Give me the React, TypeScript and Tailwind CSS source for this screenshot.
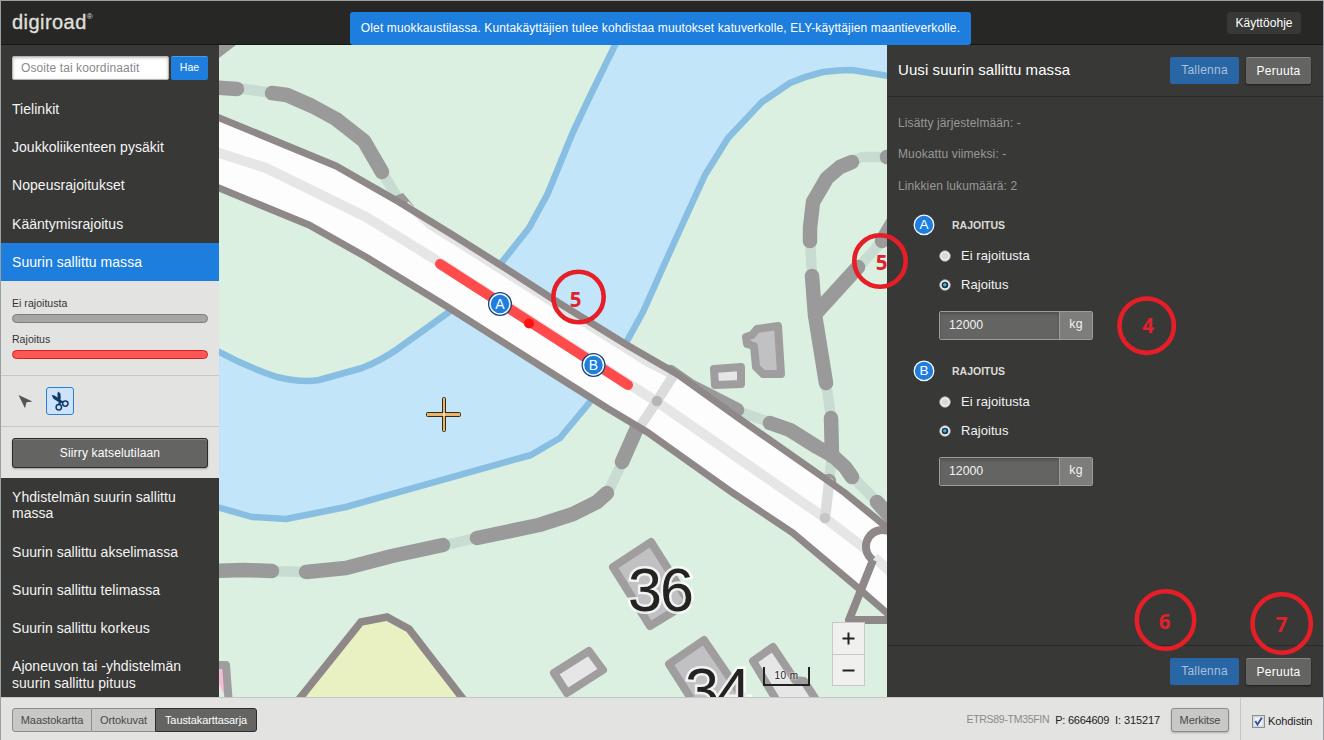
import React from "react";

const POINTS: { [k: string]: string } = {
  upperEdge: "210,114 336,166 399,202 456,237 502,266 559,303 627,345 677,374 737,417 827,480 845,493 895,534",
  lowerEdge: "210,184 219,188 309,225 366,257 446,306 550,372 607,408 647,432 733,493 793,533 857,587 895,620",
  center: "210,150 266,168 366,217 436,260 657,402 825,518 863,547 895,576",
};

function Trail({ points, gap }: { points: string; gap?: boolean }) {
  return (
    <polyline
      points={points}
      fill="none"
      stroke={gap ? "#c8dcd1" : "#9b9a9b"}
      strokeWidth={gap ? 10.5 : 14.5}
      strokeLinecap={gap ? "butt" : "round"}
      strokeLinejoin="round"
    />
  );
}

function MapMarker({ x, y, label }: { x: number; y: number; label: string }) {
  return (
    <g>
      <circle cx={x} cy={y} r={12} fill="#17406e" />
      <circle cx={x} cy={y} r={10} fill="#1d7edd" stroke="#f4f9fe" strokeWidth={1.5} />
      <text x={x} y={y + 5} textAnchor="middle" fontSize={14} fill="#fff" fontFamily="Liberation Sans, Arial, sans-serif">
        {label}
      </text>
    </g>
  );
}

function HouseNumber({ x, y, text }: { x: number; y: number; text: string }) {
  return (
    <g fontSize={61} letterSpacing={-2} fontFamily="Liberation Sans, Arial, sans-serif">
      <text x={x} y={y} fill="#252321" stroke="#ffffff" strokeOpacity={0.8} strokeWidth={5} paintOrder="stroke">
        {text}
      </text>
    </g>
  );
}

function MapDrawing() {
  return (
    <svg className="block h-full w-full" viewBox="219 45 668 652">
      <rect x="219" y="45" width="668" height="652" fill="#dbf0e0" />
      <path
        d="M620 35 L592 92 L573 132 L550 188 L547 195 L529 228 L502 262 L449 312 L396 350 Q380 361 362 368 L319 380 Q302 383 277 377 Q246 367 210 347 L210 505 L252 517 L286 519 L346 507 L531 455 L560 438 L590 402 L627 341 L643 312 L673 245 L705 175 L728 138 L762 102 L790 83 Q806 76 823 72 Q838 70 852 70 L895 77 L895 35 Z"
        fill="#c3e5f9"
        stroke="#88bee1"
        strokeWidth="6.5"
        strokeLinejoin="round"
      />
      <path d="M219 45 L236 45 L219 58 Z" fill="#9b9a9b" />
      <Trail gap points="236,88 274,93" />
      <Trail points="210,87 237,89" />
      <Trail gap points="382,172 400,202" />
      <Trail points="272,93 287,95 312,106 336,119 364,141 382,172" />
      <polygon points="395,196 403,193 414,206 410,210" fill="#9b9a9b" />
      <Trail gap points="270,571 308,572" />
      <Trail points="210,571 244,570 272,571" />
      <Trail gap points="442,546 480,537" />
      <Trail points="306,572 346,568 392,556 443,545" />
      <Trail gap points="607,494 623,461" />
      <Trail points="477,538 539,525 573,514 597,502 607,493" />
      <Trail points="622,462 637,428" />
      <Trail gap points="850,162 862,157 885,157" />
      <Trail gap points="810,240 812,276" />
      <Trail points="852,162 840,167 827,178 813,202 810,228 810,241" />
      <Trail points="887,157 895,156" />
      <Trail gap points="858,268 884,239" />
      <Trail points="882,241 895,219" />
      <Trail points="858,267 817,312" />
      <Trail gap points="826,382 831,418" />
      <Trail points="812,276 815,315 826,383" />
      <Trail gap points="737,411 772,423" />
      <Trail gap points="832,455 829,482" />
      <Trail points="831,418 832,456" />
      <Trail points="829,481 828,485" />
      <Trail points="670,372 690,386 737,410" />
      <Trail gap points="850,474 880,505" />
      <Trail points="770,423 790,430 817,447 833,456 845,467 852,477" />
      <Trail points="877,502 895,522" />
      <path d={`M${POINTS.upperEdge.split(" ").join(" L")} L895 620 L857 587 L793 533 L733 493 L647 432 L607 408 L550 372 L446 306 L366 257 L309 225 L210 184 Z`} fill="#fdfdfd" />
      <polyline points="406,204 430,226 456,242 552,303 647,363 677,378" fill="none" stroke="#e6e5e5" strokeWidth="7" />
      <polyline points={POINTS.center} fill="none" stroke="#e7e6e6" strokeWidth="10" />
      <polyline points="639,428 657,401 675,373" fill="none" stroke="#dddcdc" strokeWidth="10" />
      <circle cx="657" cy="401" r="5.3" fill="#b7b4b4" />
      <polyline points="829,483 825,518" fill="none" stroke="#dddcdc" strokeWidth="10.5" strokeLinecap="round" />
      <circle cx="825" cy="518" r="5.3" fill="#c8c5c5" />
      <polyline points={POINTS.upperEdge} fill="none" stroke="#8f8889" strokeWidth="7" />
      <polyline points={POINTS.lowerEdge} fill="none" stroke="#8f8889" strokeWidth="7" />
      <path d="M873 560 L849 620 L895 620" fill="none" stroke="#8f8889" strokeWidth="8" strokeLinejoin="round" />
      <path d="M892 533 A16.5 16.5 0 1 0 873 560" fill="#fdfdfd" stroke="#8f8889" strokeWidth="8" />

      <g stroke="#a09d9e" strokeWidth="8" strokeLinejoin="round">
        <path d="M651 542 L613 567 L650 626 L689 602 Z" fill="#c1c1c4" />
        <path d="M704 640 L669 664 L706 722 L745 700 Z" fill="#c1c1c4" />
        <path d="M757 329 L778 326 L781 374 L763 374 L756 367 L754 346 L747 344 L746 337 L752 335 Z" fill="#c1c1c4" />
        <path d="M714 369 L741 367 L741 384 L715 385 Z" fill="#e6e6e7" />
        <path d="M589 651 L554 673 L567 693 L603 670 Z" fill="#e6e6e7" />
        <path d="M773 647 L753 661 L780 706 L820 706 L804 681 L795 680 Z" fill="#e6e6e7" />
        <path d="M210 665 L226 665 L229 705" fill="#f7bcd8" />
      </g>
      <path d="M292 708 L361 622 L387 617 L409 629 L470 708" fill="#e9f0c2" stroke="#8f8889" strokeWidth="7.5" />
      <HouseNumber x={628} y={611} text="36" />
      <HouseNumber x={685} y={710.5} text="34" />

      <line x1="440" y1="264" x2="628" y2="385" stroke="#ff4b4b" strokeWidth="10" strokeLinecap="round" />
      <circle cx="529" cy="323.5" r="5" fill="#ff1010" />
      <MapMarker x={500} y={304} label="A" />
      <MapMarker x={593.5} y={365} label="B" />

      <g stroke="#33291b">
        <rect x="426.5" y="412.5" width="34" height="4" rx="1" fill="#e9b46c" />
        <rect x="442.5" y="397.5" width="3" height="34" rx="1" fill="#e9b46c" />
      </g>
      <rect x="427" y="413" width="33" height="3" fill="#e9b46c" />
      <rect x="443" y="413" width="2" height="3" fill="#f8dfc0" />
    </svg>
  );
}

function MapPane() {
  return (
    <main className="relative w-[668px] shrink-0 overflow-hidden">
      <MapDrawing />
      <div className="absolute bottom-[11px] left-[544px] flex h-[19px] w-[47px] items-center justify-center border-2 border-t-0 border-[#222] text-[10px] tracking-[0.4px] text-[#222] [text-shadow:0_0_2px_#fff,0_0_2px_#fff]">
        10 m
      </div>
      <div className="absolute bottom-[11px] left-[613px] flex h-[64px] w-[33px] flex-col border border-[#c8c8c6] bg-[#f0f0ee]">
        <button className="flex h-[32px] items-center justify-center border-b border-[#c8c8c6]">
          <svg width="13" height="13" viewBox="0 0 13 13"><path d="M6.5 0.5V12.5M0.5 6.5H12.5" stroke="#222" strokeWidth="2" /></svg>
        </button>
        <button className="flex flex-1 items-center justify-center">
          <svg width="13" height="13" viewBox="0 0 13 13"><path d="M0.5 6.5H12.5" stroke="#222" strokeWidth="2" /></svg>
        </button>
      </div>
    </main>
  );
}

function LayerItem({ children }: { children: React.ReactNode }) {
  return <li className="py-[11px] pl-[11px] leading-[16.25px] text-[#f4f4f4]">{children}</li>;
}

function Sidebar() {
  return (
    <aside className="w-[218px] shrink-0 overflow-hidden bg-[#383836] text-[14px] tracking-[0.04px]">
      <form className="flex gap-[2px] px-[11px] pt-[11px] pb-[10px]">
        <input
          className="h-6 w-[157px] rounded-[2px] border border-[#b5b5b5] bg-white px-2 text-[12px] tracking-[0.1px] shadow-[inset_0_1px_3px_rgba(0,0,0,0.25)] placeholder:text-[#8a8a8a]"
          placeholder="Osoite tai koordinaatit"
        />
        <button className="h-6 w-[37px] rounded-[2px] border-t border-[#4b9ae6] bg-[#1d7edd] pb-0.5 text-[10.5px] leading-none text-white">Hae</button>
      </form>
      <ul>
        <LayerItem>Tielinkit</LayerItem>
        <LayerItem>Joukkoliikenteen pysäkit</LayerItem>
        <li className="pt-[10.5px] pb-[11.5px] pl-[11px] leading-[16.25px] text-[#f4f4f4]">Nopeusrajoitukset</li>
        <LayerItem>Kääntymisrajoitus</LayerItem>
        <li className="h-[38px] bg-[#1d7edd] pl-[11px] leading-[38px] text-white">Suurin sallittu massa</li>
      </ul>
      <section className="bg-[#e3e3e1] text-[#333]">
        <div className="h-[95px] border-b border-[#c8c8c6] px-[11px] pt-[15px] text-[10.5px] leading-[15px]">
          <div>Ei rajoitusta</div>
          <div className="mt-[3px] h-[9px] rounded-full border border-[#7d7d7b] bg-[#a6a6a4]" />
          <div className="mt-[9px]">Rajoitus</div>
          <div className="mt-[3px] h-[9px] rounded-full border border-[#d8201f] bg-[#fb5757]" />
        </div>
        <div className="flex h-[51px] items-center border-b border-[#c8c8c6] pl-[17px]">
          <svg width="15" height="15" viewBox="0 0 15 15"><path d="M0.5 1 L14.5 7.5 L8.5 8.3 L7 14.2 Z" fill="#555553" /></svg>
          <button className="ml-[13px] flex h-7 w-7 items-center justify-center rounded-[3px] border border-[#2a80d2] bg-[#cce3fb]">
            <svg width="20" height="22" viewBox="0 0 20 22">
              <path d="M1.6 5 L4.5 5.4 L10.5 9.6 L13 13 L9.8 12.8 L3.4 8.8 Z M8.3 1.6 L10.4 3.4 L10.8 7.5 L10 12 L7.6 7.6 L7.4 3.6 Z" fill="#123a66" />
              <path d="M10 11.5 L9 15.5 M10.5 11.5 L14 12.5" stroke="#123a66" strokeWidth="2.2" />
              <circle cx="8.8" cy="17.3" r="2.7" fill="#cce3fb" stroke="#123a66" strokeWidth="1.5" />
              <circle cx="15.3" cy="13.6" r="2.7" fill="#cce3fb" stroke="#123a66" strokeWidth="1.5" />
            </svg>
          </button>
        </div>
        <div className="h-[51px] px-[11px] pt-[11px]">
          <button className="h-[30px] w-full rounded-[3px] border border-[#2c2c2a] bg-[#646462] text-[12px] tracking-[0.15px] text-white shadow-[0_1px_2px_rgba(0,0,0,0.3),inset_0_1px_0_rgba(255,255,255,0.2)]">
            Siirry katselutilaan
          </button>
        </div>
      </section>
      <ul>
        <LayerItem>Yhdistelmän suurin sallittu<br />massa</LayerItem>
        <LayerItem>Suurin sallittu akselimassa</LayerItem>
        <LayerItem>Suurin sallittu telimassa</LayerItem>
        <LayerItem>Suurin sallittu korkeus</LayerItem>
        <LayerItem>Ajoneuvon tai -yhdistelmän<br />suurin sallittu pituus</LayerItem>
      </ul>
    </aside>
  );
}

function FormButtons() {
  return (
    <div className="flex gap-[7px] text-[12px] tracking-[0.25px]">
      <button className="h-[27px] w-[69px] rounded-[2px] bg-[#2866a5] pb-px text-[#a9c1da]">Tallenna</button>
      <button className="h-[27px] w-[65px] rounded-[2px] border-t border-[#868684] bg-[#646462] pb-px text-white shadow-[0_1px_2px_rgba(0,0,0,0.5)]">Peruuta</button>
    </div>
  );
}

function Radio({ label, checked }: { label: string; checked?: boolean }) {
  return (
    <div className="flex h-[29px] items-center gap-[10px] text-[13px] tracking-[0.06px] text-[#f2f2f2]">
      <svg width="12" height="12" viewBox="0 0 12 12">
        <circle cx="6" cy="6" r="5.3" fill="#efefef" stroke="#a9a9a9" strokeWidth="0.8" />
        <circle cx="6" cy="6" r="3.3" fill={checked ? "#16364f" : "#d8d8d8"} />
        {checked && <circle cx="5.8" cy="5.8" r="1.7" fill="#4ea9cf" />}
      </svg>
      <span>{label}</span>
    </div>
  );
}

function RestrictionGroup({ side }: { side: string }) {
  return (
    <section className="h-[146px] pl-[26px]">
      <div className="flex h-[22px] items-center">
        <svg width="22" height="22" viewBox="0 0 22 22">
          <circle cx="11" cy="10.9" r="9.8" fill="#1d7edd" stroke="#f2f8fe" strokeWidth="1.3" />
          <text x="11" y="15.3" textAnchor="middle" fontSize="13.5" fill="#fff">{side}</text>
        </svg>
        <h3 className="ml-[17px] pt-0.5 text-[10.5px] font-bold text-[#dcdcda]">RAJOITUS</h3>
      </div>
      <div className="pt-[5px] pl-[26px]">
        <Radio label="Ei rajoitusta" />
        <Radio label="Rajoitus" checked />
        <div className="mt-[12px] flex h-[29px] w-[154px] overflow-hidden rounded-[2px] border border-[#9d9d9b] text-[12.3px] leading-[27px] text-[#f2f2f2]">
          <div className="w-[119px] bg-[#646462] pl-[9px] shadow-[inset_0_2px_3px_rgba(0,0,0,0.2)]">12000</div>
          <div className="flex-1 border-l border-[#9d9d9b] bg-[#7d7d7b] text-center leading-[25px] tracking-[0.3px]">kg</div>
        </div>
      </div>
    </section>
  );
}

function DetailPanel() {
  return (
    <aside className="flex flex-1 flex-col bg-[#383836]">
      <header className="flex h-[52px] items-center justify-between border-b border-[#2a2a28] pr-3 pl-[11px]">
        <h2 className="text-[15px] tracking-[0.08px] text-white">Uusi suurin sallittu massa</h2>
        <FormButtons />
      </header>
      <div className="flex-1">
        <div className="pt-[18px] pb-[13px] pl-[11px] text-[12px] tracking-[0.12px] text-[#999997]">
          <p className="h-[31px] leading-4">Lisätty järjestelmään: -</p>
          <p className="h-8 leading-4">Muokattu viimeksi: -</p>
          <p className="h-4 leading-4">Linkkien lukumäärä: 2</p>
        </div>
        <div className="pt-[7px]">
          <RestrictionGroup side="A" />
          <RestrictionGroup side="B" />
        </div>
      </div>
      <footer className="flex h-[52px] items-center justify-end border-t border-[#2a2a28] pr-3">
        <FormButtons />
      </footer>
    </aside>
  );
}

function BottomBar() {
  return (
    <footer className="flex h-[43px] shrink-0 justify-between border-t border-[#c6c6c4] bg-[#e3e3e1] text-[11px] tracking-[-0.1px]">
      <div className="mt-[10px] flex h-6 pl-[11px] text-[#4a4a48]">
        <button className="w-20 rounded-l-[3px] border border-[#8d8d8b] bg-[#c8c8c6]">Maastokartta</button>
        <button className="w-[63px] border-y border-[#8d8d8b] bg-[#c8c8c6]">Ortokuvat</button>
        <button className="w-[102px] rounded-r-[3px] border border-[#2c2c2a] bg-[#646462] text-white">Taustakarttasarja</button>
      </div>
      <div className="flex">
        <div className="flex items-center gap-[6px] pt-0.5 text-[#222]">
          <span className="text-[10.5px] tracking-[-0.3px] text-[#8b8b89]">ETRS89-TM35FIN</span>
          <span className="tracking-[-0.25px]">P: 6664609</span>
          <span className="tracking-[-0.1px]">I: 315217</span>
        </div>
        <button className="mt-[10px] mr-[11px] ml-[11px] h-6 w-[58px] rounded-[3px] border border-[#8d8d8b] bg-[#c8c8c6] text-[#4a4a48] shadow-[0_1px_2px_rgba(0,0,0,0.25)]">Merkitse</button>
        <label className="flex w-[83px] items-center border-l border-[#c6c6c4] pt-1 pl-[11px] text-[#222]">
          <svg width="13" height="13" viewBox="0 0 13 13">
            <rect x="0.5" y="0.5" width="12" height="12" fill="#dfe3ea" stroke="#8e8f8f" />
            <rect x="2" y="2" width="9" height="9" fill="#f3f5f8" stroke="#b9bfc8" strokeWidth="0.6" />
            <path d="M3.3 6 L5.5 9.5 L9.8 2.8" fill="none" stroke="#3b4f96" strokeWidth="1.9" />
          </svg>
          <span className="ml-[3px]">Kohdistin</span>
        </label>
      </div>
    </footer>
  );
}

function Callout({ x, y, r, label, dx, dy }: { x: number; y: number; r: number; label: string; dx: number; dy: number }) {
  return (
    <g>
      <circle cx={x} cy={y} r={r - 2.3} fill="none" stroke="#e61e27" strokeWidth="4.6" />
      <text x={x + dx} y={y + dy} textAnchor="middle" className="fill-[#e0222c] font-['Noto_Sans','Open_Sans',sans-serif] text-[20.5px] font-bold">
        {label}
      </text>
    </g>
  );
}

export default function App() {
  return (
    <div className="relative flex h-[740px] w-[1324px] flex-col overflow-hidden border-x border-t border-[#9a9fa1] bg-[#e3e3e1] font-['Liberation_Sans',Arial,sans-serif]">
      <header className="flex h-11 shrink-0 items-start justify-between border-b border-[#161615] bg-[#272725] pr-[22px] pl-[11px]">
        <div className="mt-[9px] flex items-start text-[20px] leading-[24px] tracking-[0.45px] text-[#e0e0de] [-webkit-text-stroke:0.3px_#e0e0de]">
          <span>digiroad</span>
          <span className="mt-[3px] text-[8px] leading-[8px] tracking-normal [-webkit-text-stroke:0px]">®</span>
        </div>
        <button className="mt-[11px] h-[22px] w-[74px] rounded-[3px] bg-[#383836] text-[12px] tracking-[0.05px] text-white">Käyttöohje</button>
      </header>
      <div className="flex h-[652px] shrink-0">
        <Sidebar />
        <MapPane />
        <DetailPanel />
      </div>
      <BottomBar />
      <div className="absolute top-[11px] left-[349px] h-[33px] w-[621px] rounded-[3px] bg-[#1d7edd] text-center text-[12px] leading-[32px] tracking-[0.125px] whitespace-nowrap text-white">
        Olet muokkaustilassa. Kuntakäyttäjien tulee kohdistaa muutokset katuverkolle, ELY-käyttäjien maantieverkolle.
      </div>
      <svg className="pointer-events-none absolute top-[-1px] left-[-1px]" width="1324" height="740" viewBox="0 0 1324 740">
        <Callout x={578.5} y={297} r={27.5} label="5" dx={-3} dy={10} />
        <Callout x={880} y={261} r={28} label="5" dx={1.5} dy={9} />
        <Callout x={1146.7} y={325.7} r={29.5} label="4" dx={1.3} dy={7.5} />
        <Callout x={1165.5} y={620} r={31} label="6" dx={-1} dy={9} />
        <Callout x={1281.7} y={623.5} r={31.5} label="7" dx={0} dy={8.5} />
      </svg>
    </div>
  );
}
